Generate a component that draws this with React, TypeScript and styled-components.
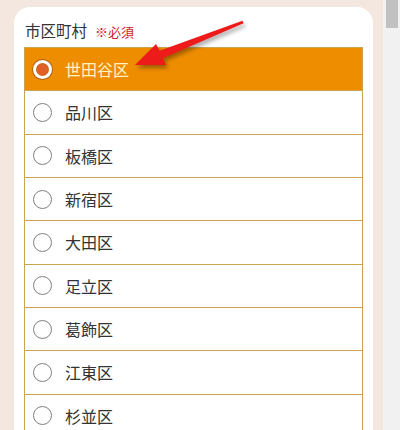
import React from 'react';
import styled, { createGlobalStyle } from 'styled-components';

const GlobalStyle = createGlobalStyle`
  html, body {
    margin: 0;
    padding: 0;
    background: #f4e7df;
  }
  #root {
    height: 430px;
    overflow: hidden;
  }
`;

const Screen = styled.div`
  display: flex;
  height: 430px;
  font-family: 'Noto Sans CJK JP', 'Noto Sans', sans-serif;
`;

const Page = styled.div`
  position: relative;
  flex: 1;
  padding: 7px 10px 0 14px;
  background: #f4e7df;
`;

const ScrollTrack = styled.div`
  width: 17px;
  background: #f1f1f1;
  display: flex;
  justify-content: center;
`;

const ScrollThumb = styled.div`
  width: 12px;
  height: 28px;
  background: #c1c1c1;
`;

const Card = styled.div`
  background: #fff;
  border-radius: 16px 16px 0 0;
  padding: 10px 10px 0 10px;
  min-height: 500px;
`;

const Label = styled.div`
  display: flex;
  align-items: baseline;
  gap: 8px;
  height: 30px;
  line-height: 26px;
  padding-left: 1px;
  font-size: 15.5px;
  color: #333;
`;

const Required = styled.span`
  font-size: 13px;
  color: #d11a2a;
`;

const List = styled.div`
  border: 1px solid #c9a551;
  border-bottom: none;
`;

const Row = styled.label<{ $selected?: boolean }>`
  display: flex;
  align-items: center;
  gap: 13px;
  height: 42.33px;
  padding-left: 8px;
  border-bottom: 1px solid #c9a551;
  background: ${(p) => (p.$selected ? '#ef8d00' : '#fff')};
  color: ${(p) => (p.$selected ? '#fff3c2' : '#333')};
  font-size: 16px;
`;

const Radio = styled.span<{ $selected?: boolean }>`
  box-sizing: border-box;
  width: 19px;
  height: 19px;
  border-radius: 50%;
  flex-shrink: 0;
  border: ${(p) => (p.$selected ? '3.5px solid #fff' : '1.3px solid #808080')};
  background: ${(p) => (p.$selected ? '#e05f26' : '#fff')};
  box-shadow: ${(p) => (p.$selected ? 'inset 0 0 0 1px #c86a20, 0 0 0 1px #b06010' : 'none')};
`;

const Arrow = styled.svg`
  position: absolute;
  left: 0;
  top: 0;
  pointer-events: none;
  filter: drop-shadow(2px 3px 2px rgba(0, 0, 0, 0.35));
`;

const wards = ['世田谷区', '品川区', '板橋区', '新宿区', '大田区', '足立区', '葛飾区', '江東区', '杉並区', '練馬区'];

const App: React.FC = () => {
  const selected = '世田谷区';
  return (
    <>
      <GlobalStyle />
      <Screen>
        <Page>
          <Card>
            <Label>
              市区町村<Required>※必須</Required>
            </Label>
            <List>
              {wards.map((w) => (
                <Row key={w} $selected={w === selected}>
                  <Radio $selected={w === selected} />
                  {w}
                </Row>
              ))}
            </List>
          </Card>
          <Arrow width="300" height="100" viewBox="0 0 300 100">
            <polygon
              points="135,65 166,65 162.8,58.3 243.6,23.2 242.4,20.8 159.6,50.8 156,44"
              fill="#ee1b1b"
            />
          </Arrow>
        </Page>
        <ScrollTrack>
          <ScrollThumb />
        </ScrollTrack>
      </Screen>
    </>
  );
};

export default App;
